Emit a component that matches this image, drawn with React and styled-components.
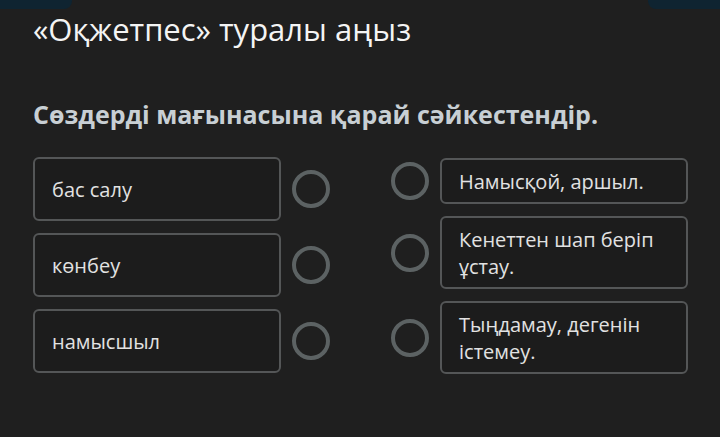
import styled, { createGlobalStyle } from "styled-components";

const GlobalStyle = createGlobalStyle`
  html, body {
    margin: 0;
    padding: 0;
    background: #1f1f1f;
  }
  body {
    font-family: "Open Sans", "Noto Sans", sans-serif;
  }
`;

const Page = styled.div`
  width: 720px;
  height: 437px;
  background: #1f1f1f;
  overflow: hidden;
`;

const TopBar = styled.div`
  display: flex;
  justify-content: space-between;
  height: 9px;
`;

const Stub = styled.div`
  width: ${(p) => p.width}px;
  height: 9px;
  background: #0f2431;
  border-radius: ${(p) => (p.side === "left" ? "0 0 8px 0" : "0 0 0 8px")};
`;

const Content = styled.div`
  padding: 2px 0 0 33px;
`;

const Title = styled.h1`
  margin: 0;
  font-size: 31px;
  line-height: 36px;
  font-weight: 400;
  color: #f4f4f4;
  white-space: nowrap;
`;

const Subtitle = styled.h2`
  margin: 51px 0 0;
  font-size: 25px;
  line-height: 32px;
  font-weight: 700;
  color: #c8cfd4;
  white-space: nowrap;
`;

const Board = styled.div`
  display: flex;
  gap: 61px;
  margin-top: 27px;
`;

const Column = styled.div`
  display: flex;
  flex-direction: column;
  gap: 12px;
  padding-top: ${(p) => p.offset || 0}px;
`;

const Row = styled.div`
  display: flex;
  align-items: center;
  gap: 11px;
`;

const Card = styled.div`
  box-sizing: border-box;
  width: 248px;
  min-height: ${(p) => p.minHeight || 0}px;
  display: flex;
  align-items: center;
  padding: 7.5px 16px 7.5px 17px;
  border: 2px solid #545657;
  border-radius: 6px;
  background: #1c1c1c;
  color: #e2e2e2;
  font-size: 20px;
  line-height: 27px;
`;

const Ring = styled.div`
  box-sizing: border-box;
  flex: none;
  width: 38px;
  height: 38px;
  border: 4px solid #5c6263;
  border-radius: 50%;
`;

const left = ["бас салу", "көнбеу", "намысшыл"];
const right = [
  "Намысқой, аршыл.",
  "Кенеттен шап беріп ұстау.",
  "Тыңдамау, дегенін істемеу.",
];

export default function App() {
  return (
    <Page>
      <GlobalStyle />
      <TopBar>
        <Stub side="left" width={72} />
        <Stub side="right" width={72} />
      </TopBar>
      <Content>
        <Title>«Оқжетпес» туралы аңыз</Title>
        <Subtitle>Сөздерді мағынасына қарай сәйкестендір.</Subtitle>
        <Board>
          <Column>
            {left.map((t) => (
              <Row key={t}>
                <Card minHeight={64}>{t}</Card>
                <Ring />
              </Row>
            ))}
          </Column>
          <Column offset={1}>
            {right.map((t) => (
              <Row key={t}>
                <Ring />
                <Card>{t}</Card>
              </Row>
            ))}
          </Column>
        </Board>
      </Content>
    </Page>
  );
}
